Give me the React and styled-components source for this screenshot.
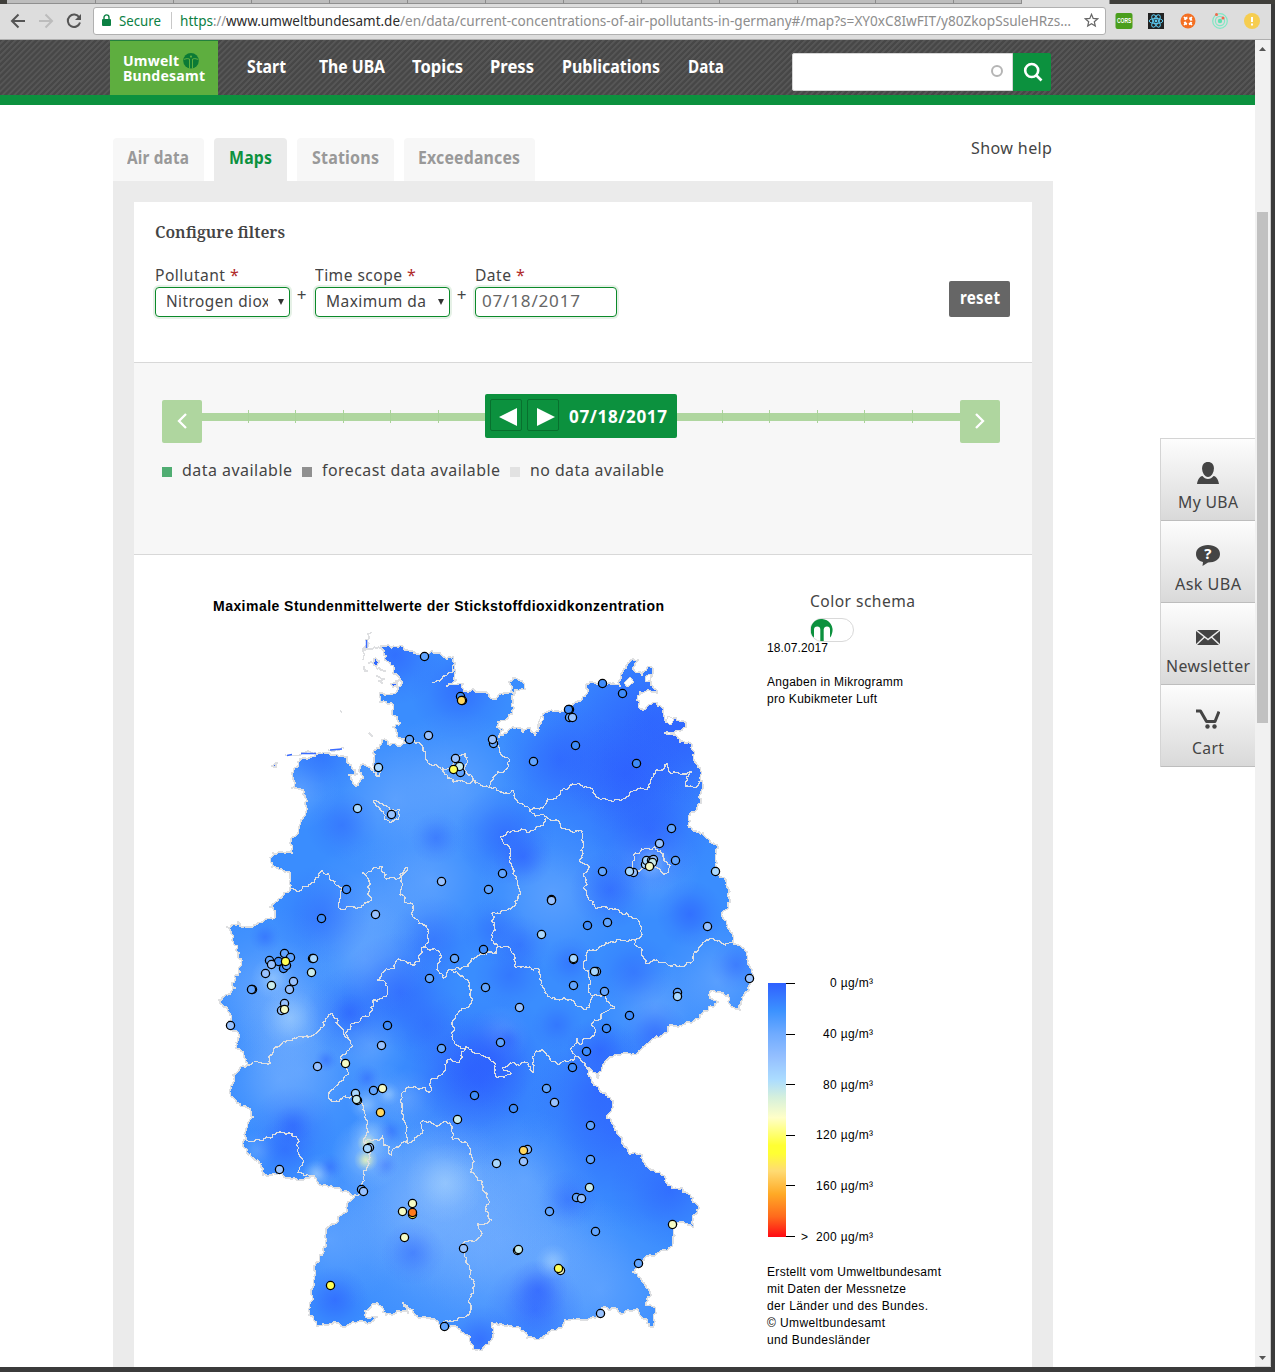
import React, { useLayoutEffect, useRef } from "react";
import styled, { createGlobalStyle, css } from "styled-components";

const GlobalStyle = createGlobalStyle`
  * { box-sizing: border-box; }
  body { margin: 0; overflow: hidden; background: #3b3b3b; }
`;

const sans = `"Noto Sans", "Open Sans", sans-serif`;
const helv = `"Liberation Sans", Arial, sans-serif`;

/* ---------- text fitted to the width of its slot ---------- */
const Slot = styled.span`
  display: inline-block;
  flex: none;
  width: ${(p) => p.$w}px;
  white-space: nowrap;
  text-align: left;
`;
const Ink = styled.span`
  display: inline-block;
  transform-origin: 0 50%;
  white-space: pre;
`;
function Fit({ w, spaced, track = 0, children }) {
  const ref = useRef(null);
  useLayoutEffect(() => {
    const el = ref.current;
    el.style.transform = "none";
    el.style.letterSpacing = `${track}px`;
    const natural = el.getBoundingClientRect().width - track;
    if (spaced) el.style.letterSpacing = `${(w - natural) / (el.textContent.length - 1)}px`;
    else el.style.transform = `scaleX(${w / natural})`;
  }, [w, spaced, track]);
  return (
    <Slot $w={w}>
      <Ink ref={ref}>{children}</Ink>
    </Slot>
  );
}

/* ---------- browser window ---------- */
const Window = styled.div`
  width: 1275px;
  height: 1372px;
  background: #3b3b3b;
  display: flex;
  flex-direction: column;
  font-family: ${sans};
  color: #444;
  overflow: hidden;
`;
const TabStrip = styled.div`
  height: 4px;
  display: flex;
  background: #403f3b;
  padding-left: 7px;
`;
const BrowserTab = styled.div`
  width: ${(p) => p.$w}px;
  background: ${(p) => (p.$active ? "#dddddd" : "#bdbdbd")};
  border-right: 1px solid #8c8c8c;
  border-bottom: ${(p) => (p.$active ? "0" : "1px solid #8f8f8f")};
`;
const Toolbar = styled.div`
  width: 1271px;
  height: 36px;
  background: #dddddd;
  border-bottom: 1px solid #aeaeae;
  display: flex;
  align-items: center;
  padding: 0 0 2px 10px;
`;
const NavIcons = styled.div`
  display: flex;
  gap: 12px;
  width: 83px;
`;
const Address = styled.div`
  width: 1013px;
  height: 28px;
  margin-right: 9px;
  background: #fff;
  border: 1px solid #b0b0b0;
  border-radius: 3px;
  display: flex;
  align-items: center;
  font-size: 15px;
  line-height: 26px;
  padding: 0 0 1px 8px;
  color: #8d8d8d;
`;
const Secure = styled.span`
  color: #0b8043;
  margin-left: 8px;
  display: flex;
`;
const Divider = styled.i`
  width: 1px;
  height: 17px;
  background: #c8c8c8;
  margin: 0 8px 0 10px;
`;
const Scheme = styled.span`
  color: #0b8043;
  display: flex;
`;
const Host = styled.span`
  color: #2c2c2c;
  display: flex;
`;
const Star = styled.span`
  margin-left: 13px;
  display: flex;
`;
const Extensions = styled.div`
  display: flex;
  gap: 14px;
`;
const Body = styled.div`
  display: flex;
  width: 1271px;
  height: 1327px;
  background: #f0f0f0;
  border-bottom: 1px solid #d8d8d8;
`;
const Page = styled.div`
  width: 1255px;
  height: 1327px;
  background: #fff;
  overflow: hidden;
`;
const Scrollbar = styled.div`
  width: 16px;
  background: #f1f1f1;
  border-right: 1px solid #c9c9c9;
  display: flex;
  flex-direction: column;
  align-items: center;
  justify-content: space-between;
  padding: 7px 1px 6px 0;
`;
const Thumb = styled.div`
  width: 11px;
  height: 511px;
  margin: 161px 0 auto;
  background: #c1c1c1;
`;

/* ---------- site header ---------- */
const Header = styled.header`
  height: 65px;
  border-bottom: 10px solid #0c913e;
  background: repeating-linear-gradient(135deg, #474747 0 1.6px, #565656 2.2px 3.4px, #474747 4.2px);
  display: flex;
  padding-left: 110px;
`;
const Logo = styled.div`
  width: 108px;
  height: 55px;
  background: #5eae3f;
  border-top: 1px solid #23813c;
  color: #fff;
  font-weight: 700;
  font-size: 13.5px;
  line-height: 14px;
  padding: 12px 0 0 13px;
`;
const LogoLine = styled.div`
  display: flex;
  align-items: center;
  gap: 4px;
  height: 15px;
`;
const MainNav = styled.nav`
  display: flex;
  margin-left: 29px;
  width: 545px;
  font-size: 17.5px;
  font-weight: 700;
  line-height: 24px;
  color: #fff;
  padding-top: 14px;
`;
const NavItem = styled.a`
  display: flex;
  height: 24px;
  margin-right: ${(p) => p.$after}px;
`;
const Search = styled.div`
  display: flex;
  margin-top: 13px;
  height: 38px;
`;
const SearchField = styled.div`
  width: 221px;
  background: #fff;
  border: 1px solid #d5d5d5;
  border-radius: 2px 0 0 2px;
  display: flex;
  justify-content: flex-end;
  align-items: center;
  padding: 0 9px 3px 0;
`;
const Ring = styled.i`
  width: 12px;
  height: 12px;
  border: 2px solid #b5b5b5;
  border-radius: 50%;
`;
const SearchButton = styled.div`
  width: 38px;
  background: #0c913e;
  border-radius: 0 2px 2px 0;
  display: flex;
  align-items: center;
  justify-content: center;
  padding-left: 1px;
`;

/* ---------- content ---------- */
const Columns = styled.div`
  display: flex;
  align-items: flex-start;
`;
const Main = styled.main`
  width: 940px;
  margin: 33px 107px 0 113px;
`;
const TabRow = styled.div`
  display: flex;
  gap: 10px;
  height: 43px;
  align-items: stretch;
`;
const Tab = styled.div`
  width: ${(p) => p.$w}px;
  display: flex;
  justify-content: center;
  padding-right: 1px;
  background: ${(p) => (p.$active ? "#ebebeb" : "#f7f7f7")};
  color: ${(p) => (p.$active ? "#0c913e" : "#999")};
  border-radius: 4px 4px 0 0;
  font-size: 17.5px;
  font-weight: 700;
  line-height: 39px;
`;
const Help = styled.div`
  margin-left: auto;
  font-size: 17px;
  line-height: 20px;
  padding-right: 1px;
`;
const Panel = styled.section`
  background: #ebebeb;
  padding: 21px 21px 0;
`;
const Filters = styled.div`
  height: 161px;
  background: #fff;
  border-bottom: 1px solid #d8d8d8;
  padding: 20px 22px 0 21px;
`;
const Heading = styled.h2`
  margin: 0;
  height: 20px;
  font: 600 16px/20px "Noto Serif", "Liberation Serif", serif;
  color: #444;
`;
const Fields = styled.div`
  display: flex;
  margin-top: 22px;
`;
const Field = styled.div`
  display: flex;
  flex-direction: column;
`;
const Label = styled.label`
  display: flex;
  gap: 5px;
  height: 23px;
  font-size: 17px;
  line-height: 22px;
`;
const Required = styled.span`
  color: #b02a2a;
  font-size: 16px;
`;
const control = css`
  height: 30px;
  border: 1px solid #0b8a2a;
  border-radius: 4px;
  box-shadow: 0 0 0 2px #e6f1e7;
  background: #fff;
  display: flex;
  align-items: center;
  font-size: 17px;
  line-height: 26px;
  padding-bottom: 2px;
`;
const Select = styled.div`
  ${control}
  width: 135px;
  padding-left: 10px;
`;
const SelectText = styled.span`
  width: 102px;
  overflow: hidden;
  display: flex;
`;
const Caret = styled.i`
  margin: 2px 0 0 10px;
  border: 3px solid transparent;
  border-top: 6px solid #333;
  border-bottom: 0;
`;
const DateInput = styled.div`
  ${control}
  width: 142px;
  padding-left: 6px;
  color: #666;
`;
const Plus = styled.span`
  width: 25px;
  text-align: center;
  font-size: 17px;
  line-height: 20px;
  padding: 21px 2px 0 0;
`;
const Reset = styled.div`
  width: 61px;
  height: 36px;
  margin: 17px 0 0 auto;
  background: #666;
  border-radius: 2px;
  color: #fff;
  font-weight: 700;
  font-size: 17px;
  line-height: 34px;
  display: flex;
  justify-content: center;
`;

const Timeline = styled.div`
  height: 192px;
  background: #f7f7f7;
  border-bottom: 1px solid #d8d8d8;
  padding: 31px 32px 0 28px;
`;
const Track = styled.div`
  display: flex;
  height: 50px;
`;
const StepButton = styled.div`
  width: 40px;
  height: 43px;
  margin-top: 6px;
  background: #afd69f;
  border-radius: 2px;
  display: flex;
  align-items: center;
  justify-content: center;
  padding-bottom: 1px;
`;
const Rail = styled.div`
  width: 283px;
  height: 13px;
  margin-top: 16px;
  padding-left: ${(p) => p.$lead}px;
  display: flex;
  gap: 46.4px;
  background: linear-gradient(#afd69f, #afd69f) 0 3px / 100% 8px no-repeat;
`;
const Tick = styled.i`
  width: 1px;
  height: 13px;
  background: #a9d399;
`;
const Current = styled.div`
  width: 192px;
  height: 44px;
  background: #0c913e;
  border-radius: 2px;
  display: flex;
  gap: 5px;
  padding: 5px;
  color: #fff;
  font-weight: 700;
  font-size: 17px;
  line-height: 35px;
`;
const DayButton = styled.div`
  width: 32px;
  height: 32px;
  border: 1px solid #08702e;
  border-radius: 2px;
  display: flex;
  align-items: center;
  justify-content: flex-end;
  padding: 3px 3px 0 0;
`;
const CurrentDate = styled.span`
  display: flex;
  margin-left: 5px;
`;
const Availability = styled.div`
  display: flex;
  margin-top: 15px;
  gap: 10px;
  font-size: 17px;
  line-height: 22px;
`;
const Entry = styled.div`
  display: flex;
  gap: 10px;
`;
const Swatch = styled.i`
  width: 10px;
  height: 10px;
  margin-top: 8px;
  background: ${(p) => p.$c};
`;

const MapArea = styled.div`
  background: #fff;
  height: 812px;
  display: flex;
  padding-left: 76px;
`;
const MapColumn = styled.div`
  width: 557px;
  padding-top: 42px;
`;
const MapTitle = styled.div`
  margin-left: 3px;
  height: 18px;
  font: 700 14px/18px ${helv};
  color: #000;
`;
const MapSvg = styled.svg`
  display: block;
  margin-top: 10px;
`;
const Aside = styled.div`
  width: 200px;
  padding-top: 36px;
  font: 12px/17px ${helv};
  color: #000;
`;
const Schema = styled.div`
  margin-left: 43px;
  color: #444;
  height: 49px;
  font: 17px/20px ${sans};
`;
const Toggle = styled.div`
  width: 44px;
  height: 24px;
  margin-top: 7px;
  border: 1px solid #d9d9d9;
  border-radius: 12px;
  display: flex;
`;
const Note = styled.div`
  height: 17px;
  display: flex;
  margin-bottom: ${(p) => p.$after || 0}px;
`;
const Scale = styled.div`
  margin: 267px 0 19px 1px;
  display: flex;
  height: 270px;
  align-items: center;
`;
const ScaleBar = styled.div`
  width: 18px;
  height: 254px;
  background: linear-gradient(#2f60ff 0%, #3c92ff 11%, #6fabff 20%, #94bfff 29%, #abdcff 38%, #d5f0dc 45%, #ffffc8 53%, #ffff33 64%, #ffff33 67%, #ffdb73 74%, #ffaa26 83%, #ff6a1c 92%, #ff0a14 100%);
`;
const ScaleTicks = styled.div`
  width: 9px;
  height: 254px;
  display: flex;
  flex-direction: column;
  justify-content: space-between;
`;
const ScaleTick = styled.i`
  height: 1px;
  background: #000;
`;
const ScaleLabels = styled.div`
  width: 78px;
  height: 268px;
  display: flex;
  flex-direction: column;
  justify-content: space-between;
  align-items: flex-end;
  line-height: 14px;
`;
const ScaleLabel = styled.div`
  height: 14px;
  display: flex;
  gap: 8px;
`;

/* ---------- service bar ---------- */
const Service = styled.aside`
  width: 95px;
  margin-top: 333px;
  border-left: 1px solid #d4d4d4;
  border-top: 1px solid #d4d4d4;
`;
const ServiceItem = styled.div`
  height: 82px;
  background: linear-gradient(#fdfdfd, #d9d9d9);
  border-bottom: 1px solid #bdbdbd;
  display: flex;
  flex-direction: column;
  align-items: center;
  padding: 22px 0 0;
  gap: 5px;
  font-size: 17px;
  line-height: 24px;
`;

/* ---------- map data ---------- */
const parse = (s) => s.trim().split(/\s+/).map((p) => p.split(",").map(Number));

function noise(x, y) {
  const v = Math.sin(x * 12.9898 + y * 78.233) * 43758.5453;
  return (v - Math.floor(v)) * 2 - 1;
}
function roughen([x1, y1], [x2, y2], out) {
  const len = Math.hypot(x2 - x1, y2 - y1);
  if (len < 2.5) {
    out.push([x2, y2]);
    return;
  }
  const k = noise(x1 + x2, y1 + y2) * (len < 8 ? 0.34 : 0.17);
  const mid = [(x1 + x2) / 2 - (y2 - y1) * k, (y1 + y2) / 2 + (x2 - x1) * k];
  roughen([x1, y1], mid, out);
  roughen(mid, [x2, y2], out);
}
function toPath(s, closed) {
  const pts = parse(s);
  if (closed) pts.push(pts[0]);
  const out = [pts[0]];
  for (let i = 1; i < pts.length; i++) roughen(pts[i - 1], pts[i], out);
  return "M" + out.map((p) => p.map((n) => n.toFixed(1)).join(",")).join("L") + (closed ? "Z" : "");
}

const coast = `381,646 402,646 412,651 417,654 432,651 440,653 447,659 453,657 455,663 456,680 447,686 463,684 466,691 473,689 487,693 493,699 503,694 513,693
509,682 513,678 522,681 525,689 515,690 514,708 508,718 498,722 497,727 503,730 499,737 513,727 523,732 530,728 535,735 539,726 543,714 560,712 570,707
578,701 585,696 590,682 595,683 613,683 620,686 622,673 627,665 633,659 638,660 634,670 642,675 647,668 653,669 650,677 653,687 657,693 648,690 640,692
637,700 643,710 657,703 663,712 668,722 676,718 686,727 680,731 665,733 680,742 690,743 693,755 698,767 703,785 701,803 690,815 689,827 703,833 710,842 718,848 717,863
718,873 726,880 728,903 723,918 732,933 733,942 747,952 752,970 749,990 740,1010 732,1007 728,995 718,992 710,992 710,998 718,1002 713,1007 700,1015 687,1022 668,1027 665,1033
650,1042 638,1053 625,1053 608,1059 602,1068 598,1078 587,1068 593,1083 608,1097 613,1103 607,1118 617,1133 630,1154 642,1155 653,1170 665,1177 672,1188
682,1188 693,1198 697,1210 693,1227 680,1222 674,1228 673,1243 665,1250 650,1255 642,1262 633,1272 645,1285 650,1293 646,1305 654,1307 656,1313 653,1327
642,1318 637,1309 620,1313 615,1308 602,1308 597,1317 565,1320 560,1328 552,1330 543,1338 527,1338 520,1328 503,1325 492,1323 493,1337 482,1350 477,1350
470,1337 457,1327 443,1325 430,1318 417,1316 410,1309 403,1303 408,1313 397,1311 390,1314 383,1312 377,1303 365,1311 368,1318 377,1317 370,1323 353,1322 343,1327
317,1326 309,1315 313,1287 314,1270 323,1250 328,1227 347,1210 355,1195 337,1188 320,1185 310,1176 300,1180 288,1178 282,1173 272,1175 263,1175 255,1160
243,1145 245,1133 253,1117 237,1103 230,1090 233,1075 245,1067 243,1052 236,1048 238,1038 228,1027 230,1015 226,1007 219,1000 235,988 232,983 240,972
239,953 232,940 227,927 238,922 252,927 262,922 275,915 270,907 290,890 290,873 272,867 273,853 292,853 293,837 301,820 303,790 292,788 292,773 298,762
303,758 333,755 347,757 348,763 355,770 357,774 349,775 352,780 358,785 363,778 360,767 363,764 373,770 373,753 382,740 388,744 405,743 400,738 393,727
400,723 392,713 393,705 380,702 380,693 397,691 402,682 393,673 385,660`;

const borders = [
  `405,741 413,738 423,747 432,765 443,769`,
  `443,769 452,766 457,760 465,753 467,763 463,772 473,780 467,784 453,782 447,778 442,767`,
  `473,780 487,786 500,792 512,790 517,800 530,809 543,808 547,798 560,795 570,785 580,785 593,793 623,799 637,790 647,790 653,777 667,763 673,773 692,772 685,787 693,787 702,780`,
  `490,787 493,777 505,770 508,758 500,753 497,740`,
  `530,809 532,813 547,817 560,823 582,831 583,843 580,862 588,865 586,895 595,907 613,910 638,920 642,935 635,940 613,942 587,953 585,970 590,993 605,995 615,1008 603,1013 592,1023 595,1035 580,1045 577,1038 572,1047 575,1057 587,1067`,
  `547,817 540,827 513,830 500,837 510,853 513,873 518,897 513,907 492,913 495,927 497,947 510,948 515,967 540,970 545,993 560,1000 590,1007 593,995`,
  `497,947 497,953 483,955 467,967 453,970 443,978 437,970 440,953 423,947 427,928 413,917 410,903 400,895 402,883 408,868 400,878 385,878 383,867 362,873 370,883 372,900 353,907 338,907 343,887 322,870 307,887 290,890`,
  `423,947 422,953 415,965 397,960 395,968 377,980 385,982 387,995 373,1000 370,1015 352,1023 348,1037 332,1013 323,1027 290,1040 270,1055 268,1065 247,1065`,
  `348,1037 350,1048 340,1057 347,1075 335,1087 328,1095 335,1102 357,1097 363,1110 368,1123 363,1140 370,1157 363,1173 362,1193 355,1195`,
  `363,1143 377,1140 382,1135 383,1145 392,1155 395,1148 407,1143 407,1127 402,1093 423,1087 430,1092 432,1078 443,1073 447,1060 460,1060 465,1048 453,1040 458,1013 472,1003 472,990 453,972`,
  `465,1048 480,1054 495,1067 498,1078 510,1075 503,1067 513,1062 528,1065 533,1073 535,1055 543,1050 550,1060 575,1057`,
  `407,1143 423,1130 420,1123 450,1123 453,1140 467,1143 470,1173 487,1193 492,1220 478,1223 480,1237 463,1243 470,1273 470,1313 443,1323`,
  `243,1140 260,1140 280,1132 297,1138 298,1152 303,1160 298,1173 310,1176`,
  `635,940 643,950 645,963 657,960 667,964 692,962 698,948 732,942`,
  `635,853 655,847 663,857 670,865 667,873 647,870 635,870 635,853`,
  `373,802 383,805 400,810 398,820 387,820 380,808 373,802`,
  `432,682 440,681 448,673 455,664`,
  `373,770 376,776 380,776 381,768`,
];
const islets = [
  `371,632 368,634 366,646 363,649 363,660`,
  `366,646 380,648`,
  `285,755 302,753 320,753`,
  `328,750 344,748`,
  `376,676 383,680`,
  `376,668 386,671`,
  `340,711 342,712`,
  `369,733 373,736`,
];
const smallLand = [
  `366,640 368,646 365,650`,
  `369,663 374,659 379,661 376,666`,
  `364,667 367,671 365,671`,
  `379,681 384,679 382,683`,
  `391,684 399,680 397,687`,
  `272,766 277,763 276,767`,
];

const fills = {
  a: "#3f8cfb", b: "#62a5ff", c: "#98c2ff", d: "#a9d8ff", e: "#c9ecec",
  f: "#f5fbc4", y: "#ffff55", g: "#ffd75f", o: "#ff7a1c",
};
const stations = `424,656,b 460,696,a 462,700,g 461,700,g 428,735,c 409,739,b 455,758,c 460,772,b 459,766,e 453,769,y 493,743,b 492,739,c 378,767,d 357,808,d 391,814,c
441,881,c 488,889,b 346,889,a 321,918,a 375,914,c 502,873,b 454,958,b 483,949,a 429,978,b 485,987,b 284,953,b 269,960,b 278,961,a 290,957,b 283,968,a 286,965,b 271,964,c 285,961,y
312,958,c 313,958,d 311,972,e 265,973,c 271,985,e 293,981,c 289,989,c 252,989,b 251,989,b 284,1003,c 281,1010,c 284,1009,f 230,1025,c 317,1066,c 345,1063,f 387,1025,a 381,1045,c
441,1048,b 373,1090,b 382,1088,f 355,1093,d 357,1100,e 356,1099,e 380,1112,g 369,1147,c 367,1148,d 279,1169,c 361,1189,b 363,1191,c 474,1095,a 457,1119,e 496,1163,d 412,1203,f
402,1211,f 412,1214,y 412,1212,o 404,1237,f 463,1248,c 330,1285,y 444,1326,b 602,683,a 622,693,a 569,709,a 568,709,a 569,717,b 572,717,c 575,745,a 533,761,b 636,763,a
671,828,b 659,843,c 675,860,b 602,871,b 633,872,c 629,871,d 645,864,d 646,860,d 651,860,c 653,859,c 652,862,e 649,866,f 715,871,d 707,926,c 607,922,b 587,925,a
551,899,c 551,900,c 541,934,d 573,959,d 573,958,d 573,985,b 596,971,c 594,971,d 604,991,b 677,992,b 677,996,d 749,978,c 629,1015,a 606,1028,a 519,1007,c 500,1042,b
586,1051,a 572,1067,a 546,1088,b 554,1102,c 513,1108,a 590,1125,b 527,1149,c 523,1150,g 523,1161,c 590,1159,b 589,1187,e 576,1197,b 581,1198,c 549,1211,b 595,1231,b
672,1224,f 638,1263,b 517,1250,e 518,1249,e 560,1270,f 558,1268,y 600,1313,c`
  .split(/\s+/).map((s) => s.split(","));

const blobs = {
  light: `455,785,75 395,800,80 300,790,40 265,990,85 285,1000,60 290,1030,55 375,920,80 365,960,60 650,870,50 552,895,75 655,1008,55 718,980,60 300,1070,85 440,1190,110 445,1185,70 440,1210,80 410,1210,110
320,1175,22 550,1255,80 480,1250,140 500,1240,90 525,1180,70 380,1097,35 408,1098,30 370,1045,40 430,880,70 330,1240,70 600,1290,90 258,1150,20 500,1035,30 280,1080,60`,
  dark: `630,770,130 650,720,110 690,735,70 625,775,60 395,655,50 460,690,50 560,760,60 505,835,50 523,857,30 610,890,40 690,914,34 650,830,60
480,1080,90 470,1070,60 490,1060,50 400,992,60 620,1130,100 600,1090,70 670,1190,60 535,1310,50 538,1290,30 335,1300,34 480,1340,36 655,1035,34 600,1050,34`,
  faint: `436,838,26 342,825,36 321,915,50 433,940,44 495,930,34 634,972,38 520,945,30 510,975,36 570,962,26 557,1025,26 736,965,26 350,1013,46 427,1025,42 367,1078,14 326,1060,12 293,1130,44 285,1150,32 390,1132,14
330,1167,14 385,1165,14 413,1253,32 508,1040,15 568,1200,30 320,755,45 265,937,16 293,1125,20 350,1013,20`,
  pale: `273,978,22 290,1018,30 367,1155,36 366,1105,16 388,1094,12 553,1262,18 316,1174,14 652,862,18 370,1135,22 445,1183,40`,
  warm: `366,1160,12 367,1143,10`,
};
const blobFill = { dark: "#2c5cff", faint: "#2c60ff", light: "#76b0ff", pale: "#b4dcfd", warm: "#eef7b4" };
const blobAlpha = { dark: 0.58, faint: 0.46, light: 0.52, pale: 0.5, warm: 0.85 };

function GermanyMap() {
  const outline = toPath(coast, true);
  return (
    <MapSvg width="550" height="732" viewBox="210 625 550 732">
      <defs>
        {Object.keys(blobs).map((k) => (
          <radialGradient id={k} key={k}>
            <stop offset="0" stopColor={blobFill[k]} stopOpacity={blobAlpha[k]} />
            <stop offset=".3" stopColor={blobFill[k]} stopOpacity={blobAlpha[k] * 0.68} />
            <stop offset=".65" stopColor={blobFill[k]} stopOpacity={blobAlpha[k] * 0.24} />
            <stop offset="1" stopColor={blobFill[k]} stopOpacity="0" />
          </radialGradient>
        ))}
        <clipPath id="land"><path d={outline} /></clipPath>
      </defs>
      <g clipPath="url(#land)">
        <rect x="210" y="625" width="550" height="732" fill="#3a8dfe" />
        {Object.entries(blobs).map(([k, s]) =>
          parse(s).map(([x, y, r], i) => <circle key={k + i} cx={x} cy={y} r={r} fill={`url(#${k})`} />)
        )}
      </g>
      <g fill="none" stroke="#dedfe1" strokeWidth="1.6" strokeLinejoin="round" shapeRendering="crispEdges">
        <path d={outline} />
        {borders.map((b, i) => <path key={i} d={toPath(b)} strokeWidth="1.2" />)}
        {islets.map((b, i) => <path key={i} d={toPath(b)} />)}
        {smallLand.map((b, i) => <path key={i} d={toPath(b, true)} fill="#3068ff" />)}
      </g>
      <path d="M287,755.500L292,754.500M301,753.500L316,753.500M330,750L342,749M366.500,640V648" stroke="#3b6cff" strokeWidth="1.400" />
      <g fill="#fff" stroke="#dedfe1" strokeWidth="1" shapeRendering="crispEdges">
        <path d="M645,677l5,-3 1,6 -5,2zM668,716l6,3 -3,6 -5,-3zM630,677l4,5 -7,5 -3,-4zM541,716l3,3 -7,8z" />
      </g>
      <g stroke="#000" strokeWidth="1.3">
        {stations.map(([x, y, f], i) => (
          <circle key={i} cx={+x + 0.5} cy={+y + 0.5} r="4.1" fill={fills[f]} />
        ))}
      </g>
    </MapSvg>
  );
}

/* ---------- icons ---------- */
const Back = ({ c }) => (
  <svg width="16" height="16" viewBox="0 0 16 16" fill="none" stroke={c} strokeWidth="2"><path d="M15 8H2.5M8.5 1.5L2 8l6.500 6.500" /></svg>
);
const Forward = ({ c }) => (
  <svg width="16" height="16" viewBox="0 0 16 16" fill="none" stroke={c} strokeWidth="2"><path d="M1 8h12.500M7.500 1.500L14 8l-6.500 6.500" /></svg>
);
const Reload = () => (
  <svg width="16" height="16" viewBox="0 0 16 16"><path d="M13.300 4.500A6.200 6.200 0 1 0 14 9.500" fill="none" stroke="#555" strokeWidth="2" /><path d="M15 1v6H9z" fill="#555" /></svg>
);
const Lock = () => (
  <svg width="9" height="12" viewBox="0 0 9 12"><path d="M2 5.500V3.400a2.500 2.500 0 0 1 5 0V5.500" fill="none" stroke="#0b8043" strokeWidth="1.400" /><rect y="5" width="9" height="7" rx="1" fill="#0b8043" /></svg>
);
const StarIcon = () => (
  <svg width="15" height="15" viewBox="0 0 15 15" fill="none" stroke="#666" strokeWidth="1.200"><path d="M7.500 1.300l1.700 4.100 4.500.4-3.400 2.900 1 4.400-3.800-2.300-3.800 2.300 1-4.400L1.300 5.800l4.500-.4z" /></svg>
);
const CorsText = styled.text`
  font: 700 5px ${helv};
`;
const Cors = () => (
  <svg width="18" height="18" viewBox="0 0 18 18"><rect x=".5" y="1" width="17" height="16" rx="2" fill="#4a9e1c" /><CorsText x="2" y="7.200" fill="#fff" transform="scale(1 1.500)">CORS</CorsText></svg>
);
const ReactExt = () => (
  <svg width="18" height="18" viewBox="0 0 18 18"><rect x="1" y="1" width="16" height="16" fill="#222" /><g fill="none" stroke="#5cc8ee" strokeWidth="1"><ellipse cx="9" cy="9" rx="6.800" ry="2.600" /><ellipse cx="9" cy="9" rx="6.800" ry="2.600" transform="rotate(60 9 9)" /><ellipse cx="9" cy="9" rx="6.800" ry="2.600" transform="rotate(120 9 9)" /></g><circle cx="9" cy="9" r="1.400" fill="#5cc8ee" /></svg>
);
const OrangeExt = () => (
  <svg width="18" height="18" viewBox="0 0 18 18"><circle cx="9" cy="9" r="7.500" fill="#f47023" /><circle cx="9" cy="9" r="3.400" fill="none" stroke="#fff" strokeWidth="2.200" strokeDasharray="3.300 2.040" strokeDashoffset="-1" /><path d="M5 5l1.600 1.600M13 5l-1.600 1.600M5 13l1.600-1.600M13 13l-1.600-1.600" stroke="#fff" strokeWidth="1.600" /></svg>
);
const OrbitExt = () => (
  <svg width="18" height="18" viewBox="0 0 18 18"><g fill="none" stroke="#7fe8c4" strokeWidth="1.200"><circle cx="9" cy="9" r="7.300" /><circle cx="9" cy="9" r="4.600" /></g><circle cx="9" cy="9" r="2.200" fill="#5fe0b0" /><circle cx="5.500" cy="2.500" r="1.500" fill="#ee6a4c" /><circle cx="12" cy="6" r="1.500" fill="#ee6a4c" /></svg>
);
const WarnExt = () => (
  <svg width="18" height="18" viewBox="0 0 18 18"><circle cx="9" cy="9" r="8" fill="#f6cd50" /><path d="M9 5v5M9 11.500v2" stroke="#fff" strokeWidth="2" /></svg>
);
const Globe = () => (
  <svg width="16" height="16" viewBox="0 0 16 16"><circle cx="8" cy="7.800" r="7.800" fill="#0b7a35" /><path d="M1 6.300Q4.500 5 6.500 6L6.500 15.500M15 6.300Q11.500 5 9.500 6L9.500 15.500" fill="none" stroke="#5eae3f" strokeWidth="1" /><circle cx="8" cy="3.600" r="1.100" fill="#5eae3f" /></svg>
);
const SearchIcon = () => (
  <svg width="20" height="20" viewBox="0 0 20 20" fill="none" stroke="#fff" strokeWidth="2.600"><circle cx="8.700" cy="8.500" r="6.500" /><path d="M13 13l5.500 5.500" /></svg>
);
const Chevron = ({ right }) => (
  <svg width="12" height="16" viewBox="0 0 12 16" fill="none" stroke="#fff" strokeWidth="2.300"><path d={right ? "M2 1l7 7-7 7" : "M10 1L3 8l7 7"} /></svg>
);
const Triangle = ({ right }) => (
  <svg width="19" height="18" viewBox="0 0 19 18" fill="#fff"><path d={right ? "M1 0L19 9 1 18z" : "M18 0L0 9l18 9z"} /></svg>
);
const ToggleKnob = () => (
  <svg width="22" height="22" viewBox="0 0 22 22"><path d="M0 14A11 11 0 1 1 21 14.500Q20.500 17 19 18.500V10.500Q19 7.500 16 7.500T12.700 10.500V22H9.300V10.500Q9.300 7.500 6.200 7.500T3 10.500V18.500Q.8 17 0 14z" fill="#0c913e" /></svg>
);
const Arrow = ({ down }) => (
  <svg width="7" height="4" viewBox="0 0 7 4"><path d={down ? "M0 0h7L3.500 4z" : "M0 4h7L3.500 0z"} fill="#555" /></svg>
);
const UserIcon = () => (
  <svg width="24" height="24" viewBox="0 0 24 24" fill="#444"><path d="M12 1c3.800 0 5.900 2.600 5.900 6.300 0 4.200-2.400 8.700-5.900 8.700S6.100 11.500 6.100 7.300C6.100 3.600 8.200 1 12 1z" /><path d="M1 23c.5-3 2-7.500 5.500-8 1.500 2 3.300 3 5.500 3s4-1 5.500-3c3.500.5 5 5 5.500 8z" /></svg>
);
const AskMark = styled.text`
  font: 700 15px ${sans};
`;
const AskIcon = () => (
  <svg width="24" height="24" viewBox="0 0 24 24" fill="#444"><path d="M12 2c7 0 12 3.500 12 9s-5 8.500-12 8.500L6.500 23 7 19C2.500 18 0 15 0 11 0 5.500 5 2 12 2z" /><AskMark x="8.300" y="16" fill="#fff">?</AskMark></svg>
);
const MailIcon = () => (
  <svg width="24" height="24" viewBox="0 0 24 24"><rect y="5" width="24" height="15" fill="#444" rx="1" /><path d="M0 5l12 9.500L24 5M0 20l8.500-8M24 20l-8.500-8" fill="none" stroke="#ececec" strokeWidth="1.500" /></svg>
);
const CartIcon = () => (
  <svg width="24" height="24" viewBox="0 0 24 24"><path d="M0 4h4.500l6 10.500h8.500L23 4.500" fill="none" stroke="#444" strokeWidth="3" strokeLinejoin="round" /><circle cx="11.500" cy="19.500" r="2.200" fill="#444" /><circle cx="18.500" cy="19.500" r="2.200" fill="#444" /></svg>
);

const tabs = [["Air data", 91, 62], ["Maps", 73, 43, true], ["Stations", 97, 67], ["Exceedances", 131, 102]];
const nav = [["Start", 39, 33], ["The UBA", 66, 27], ["Topics", 51, 27], ["Press", 44, 28], ["Publications", 98, 28], ["Data", 36, 0]];
const scale = [["0 µg/m³", 43], ["40 µg/m³", 50], ["80 µg/m³", 50], ["120 µg/m³", 57], ["160 µg/m³", 57], ["200 µg/m³", 57]];
const credits = [["Erstellt vom Umweltbundesamt", 174], ["mit Daten der Messnetze", 139], ["der Länder und des Bundes.", 161], ["© Umweltbundesamt", 118], ["und Bundesländer", 103]];
const services = [["My UBA", 60, UserIcon], ["Ask UBA", 66, AskIcon], ["Newsletter", 84, MailIcon], ["Cart", 32, CartIcon]];

export default function App() {
  return (
    <Window>
      <GlobalStyle />
      <TabStrip>
        {[89, 78, 78, 78, 78, 78, 78, 78, 78, 78, 78, 78, 68].map((w, i) => <BrowserTab key={i} $w={w} />)}
        <BrowserTab $w={88} $active />
      </TabStrip>
      <Toolbar>
        <NavIcons><Back c="#555" /><Forward c="#bcbcbc" /><Reload /></NavIcons>
        <Address>
          <Lock />
          <Secure><Fit w={42}>Secure</Fit></Secure>
          <Divider />
          <Scheme><Fit w={33}>https</Fit></Scheme>
          <Fit w={13}>://</Fit>
          <Host><Fit w={174}>www.umweltbundesamt.de</Fit></Host>
          <Fit w={671}>/en/data/current-concentrations-of-air-pollutants-in-germany#/map?s=XY0xC8IwFIT/y80ZkopSsuleHRzs…</Fit>
          <Star><StarIcon /></Star>
        </Address>
        <Extensions><Cors /><ReactExt /><OrangeExt /><OrbitExt /><WarnExt /></Extensions>
      </Toolbar>
      <Body>
        <Page>
          <Header>
            <Logo>
              <LogoLine><Fit w={56} track={0.2}>Umwelt</Fit><Globe /></LogoLine>
              <LogoLine><Fit w={82} track={0.2}>Bundesamt</Fit></LogoLine>
            </Logo>
            <MainNav>
              {nav.map(([t, w, after]) => <NavItem key={t} $after={after}><Fit w={w}>{t}</Fit></NavItem>)}
            </MainNav>
            <Search>
              <SearchField><Ring /></SearchField>
              <SearchButton><SearchIcon /></SearchButton>
            </Search>
          </Header>
          <Columns>
            <Main>
              <TabRow>
                {tabs.map(([t, w, tw, on]) => <Tab key={t} $w={w} $active={on}><Fit w={tw} track={0.2}>{t}</Fit></Tab>)}
                <Help><Fit w={81} track={0.4}>Show help</Fit></Help>
              </TabRow>
              <Panel>
                <Filters>
                  <Heading><Fit w={130}>Configure filters</Fit></Heading>
                  <Fields>
                    <Field>
                      <Label><Fit w={70} track={0.5}>Pollutant</Fit><Required>*</Required></Label>
                      <Select><SelectText><Fit w={104} track={0.5}>Nitrogen diox</Fit></SelectText><Caret /></Select>
                    </Field>
                    <Plus>+</Plus>
                    <Field>
                      <Label><Fit w={87} track={0.5}>Time scope</Fit><Required>*</Required></Label>
                      <Select><SelectText><Fit w={100} track={0.5}>Maximum da</Fit></SelectText><Caret /></Select>
                    </Field>
                    <Plus>+</Plus>
                    <Field>
                      <Label><Fit w={36} track={0.5}>Date</Fit><Required>*</Required></Label>
                      <DateInput><Fit w={98} track={0.8}>07/18/2017</Fit></DateInput>
                    </Field>
                    <Reset><Fit w={40} track={0.3}>reset</Fit></Reset>
                  </Fields>
                </Filters>
                <Timeline>
                  <Track>
                    <StepButton><Chevron /></StepButton>
                    <Rail $lead={46}>{[0, 1, 2, 3, 4].map((i) => <Tick key={i} />)}</Rail>
                    <Current>
                      <DayButton><Triangle /></DayButton>
                      <DayButton><Triangle right /></DayButton>
                      <CurrentDate><Fit w={98} track={0.6}>07/18/2017</Fit></CurrentDate>
                    </Current>
                    <Rail $lead={45}>{[0, 1, 2, 3, 4].map((i) => <Tick key={i} />)}</Rail>
                    <StepButton><Chevron right /></StepButton>
                  </Track>
                  <Availability>
                    <Entry><Swatch $c="#50ad72" /><Fit w={110} track={0.5}>data available</Fit></Entry>
                    <Entry><Swatch $c="#909090" /><Fit w={178} track={0.5}>forecast data available</Fit></Entry>
                    <Entry><Swatch $c="#e2e2e2" /><Fit w={134} track={0.5}>no data available</Fit></Entry>
                  </Availability>
                </Timeline>
                <MapArea>
                  <MapColumn>
                    <MapTitle><Fit w={451} spaced>Maximale Stundenmittelwerte der Stickstoffdioxidkonzentration</Fit></MapTitle>
                    <GermanyMap />
                  </MapColumn>
                  <Aside>
                    <Schema>
                      <Fit w={105} track={0.5}>Color schema</Fit>
                      <Toggle><ToggleKnob /></Toggle>
                    </Schema>
                    <Note $after={17}><Fit w={61} spaced>18.07.2017</Fit></Note>
                    <Note><Fit w={136} spaced>Angaben in Mikrogramm</Fit></Note>
                    <Note><Fit w={110} spaced>pro Kubikmeter Luft</Fit></Note>
                    <Scale>
                      <ScaleBar />
                      <ScaleTicks>{scale.map(([t]) => <ScaleTick key={t} />)}</ScaleTicks>
                      <ScaleLabels>
                        {scale.map(([t, w], i) => (
                          <ScaleLabel key={t}>{i === 5 && <span>&gt;</span>}<Fit w={w} spaced>{t}</Fit></ScaleLabel>
                        ))}
                      </ScaleLabels>
                    </Scale>
                    {credits.map(([t, w]) => <Note key={t}><Fit w={w} spaced>{t}</Fit></Note>)}
                  </Aside>
                </MapArea>
              </Panel>
            </Main>
            <Service>
              {services.map(([t, w, Icon]) => (
                <ServiceItem key={t}><Icon /><Fit w={w} track={0.4}>{t}</Fit></ServiceItem>
              ))}
            </Service>
          </Columns>
        </Page>
        <Scrollbar><Arrow /><Thumb /><Arrow down /></Scrollbar>
      </Body>
    </Window>
  );
}
